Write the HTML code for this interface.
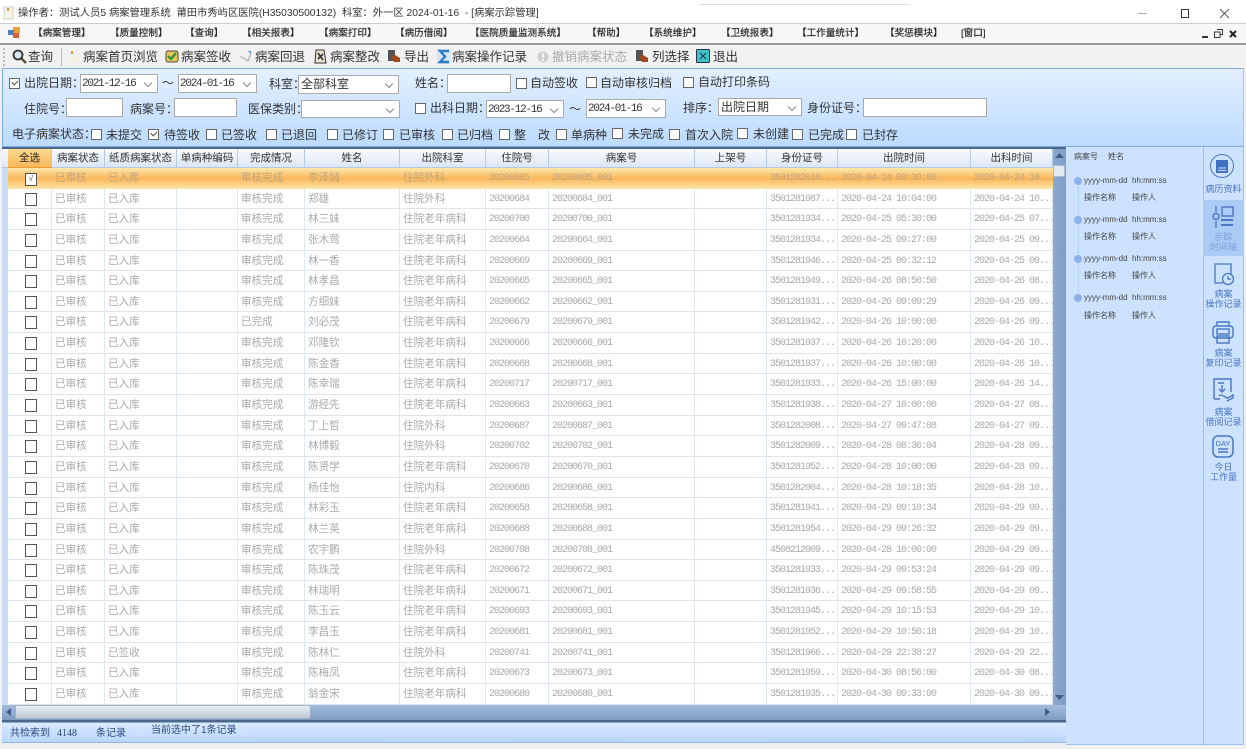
<!DOCTYPE html>
<html lang="zh"><head><meta charset="utf-8"><title>病案示踪管理</title>
<style>
*{box-sizing:border-box;margin:0;padding:0}
html,body{width:1246px;height:749px;overflow:hidden;background:#f0f0f0}
body{position:relative;font-family:"Liberation Sans","Noto Sans CJK SC",sans-serif;color:#222}
.a,.t,.cb,.sel,.inp,svg.a{position:absolute}
.t{white-space:nowrap;line-height:14px}
#title{left:0;top:0;width:1246px;height:24px;background:#fff;border-bottom:1px solid #ccc}
#menu{left:0;top:24px;width:1246px;height:21px;background:#f7f7f7;border-bottom:2px solid #999}
#tool{left:0;top:45px;width:1246px;height:24px;background:#f1f1f1}
.m{font-size:9.6px;top:27px;color:#222;-webkit-text-stroke:.2px #333}
.b{font-size:12.5px;top:50px;color:#333}
#filter{left:2px;top:68px;width:1242px;height:79px;background:linear-gradient(#e3f0ff,#bcdbff);border:1px solid #7fabe2;border-right-color:#a4c6ee}
.f{font-size:12px;color:#333}
.cb{width:11px;height:11px;background:#fff;border:1px solid #666}
.cb.on::after{content:"";position:absolute;left:2px;top:1px;width:5px;height:3px;border-left:1px solid #444;border-bottom:1px solid #444;transform:rotate(-45deg)}
.sel,.inp{background:#fff;border:1px solid #aaa;font-size:12px;color:#333;line-height:16px;padding-left:2px;white-space:nowrap;overflow:hidden}
.sel::after{content:"";position:absolute;right:6px;top:5px;width:5px;height:5px;border-right:1px solid #888;border-bottom:1px solid #888;transform:rotate(45deg)}
.d{font-family:"Liberation Mono",monospace;font-size:11px;letter-spacing:-1.25px;padding-left:1px;line-height:18px}
#grid{left:2px;top:147px;width:1064px;height:575px;background:#fff;border:1px solid #4d6787;border-top-width:2px;border-bottom-width:2px;border-left:0;overflow:hidden}
#head,.r{position:absolute;left:6px;display:flex}
#head{top:0;height:19px;left:0;width:1052px;background:linear-gradient(#f9fbfe,#dbe6f4);border-bottom:1px solid #b7c9df}
#head span{font-size:10.5px;color:#333;text-align:center;border-right:1px solid #b7c9df;line-height:19px;white-space:nowrap;overflow:hidden}
#head span:first-child{margin-left:6px;background:linear-gradient(#fbd98f,#f8b85c);color:#222;border-bottom:1px solid #f39a2d;height:19px}
#rows{position:absolute;left:0;top:19px;width:1052px;height:537px;overflow:hidden;background:linear-gradient(90deg,#c9dcf5 6px,#fff 6px)}
.r{position:static;margin-left:6px;height:20.65px;border-bottom:1px solid #dbe4f1;width:1045px}
.r span{display:block;font-size:10.6px;color:#aaa;line-height:21px;padding-left:3px;border-right:1px solid #dfe7f3;white-space:nowrap;overflow:hidden}
.r span.n{font-family:"Liberation Mono",monospace;font-size:10px;letter-spacing:-1px;padding-left:3px}
.r span:first-child{position:relative;padding:0}
.r span:first-child::after{content:"";position:absolute;left:17px;top:4px;width:10px;height:11px;border:1px solid #555;background:#fff}
.r.sel1{background:linear-gradient(#fde8ac,#fbb65c 50%,#fee6a3);border-bottom:0}
.r.sel1 span{color:#bfa67a;border-right-color:transparent}
.r.sel1 span:first-child::after{content:"√";font-size:8px;line-height:9px;text-align:center;color:#444;top:5px}
.c1{width:44px}.c2{width:53px}.c3{width:72px}.c4{width:61px}.c5{width:67px}.c6{width:95px}.c7{width:86px}.c8{width:63px}.c9{width:146px}.c10{width:72px}.c11{width:71px}.c12{width:133px}.c13{width:82px}
.r span:nth-child(1){width:44px}.r span:nth-child(2){width:53px}.r span:nth-child(3){width:72px}.r span:nth-child(4){width:61px}.r span:nth-child(5){width:67px}.r span:nth-child(6){width:95px}.r span:nth-child(7){width:86px}.r span:nth-child(8){width:63px}.r span:nth-child(9){width:146px}.r span:nth-child(10){width:72px}.r span:nth-child(11){width:71px}.r span:nth-child(12){width:133px}.r span:nth-child(13){width:82px}
#vs{left:1053px;top:149px;width:13px;height:571px;background:linear-gradient(90deg,#8ba9cf,#7f9ec6)}
#hs{left:2px;top:705px;width:1064px;height:15px;background:linear-gradient(#a3bcdb,#7d9cc3)}
#thumb{left:15px;top:705px;width:296px;height:14px;background:linear-gradient(#e8edf3,#bcc8d6);border:1px solid #a2b1c4;border-radius:2px}
#status{left:2px;top:722px;width:1064px;height:21px;background:linear-gradient(#dbeaff,#b8d7ff);border-bottom:1px solid #8eb6ec;border-top:1px solid #86a9d8}
.s{font-size:10px;color:#2b4a78}
#side{left:1066px;top:147px;width:137px;height:598px;background:#cce2fd;border-bottom:1px solid #9fc1ee}
#nav{left:1203px;top:147px;width:41px;height:598px;background:#cce2fd;border-left:1px solid #9cbdea;border-right:1px solid #9cbdea;border-bottom:1px solid #9fc1ee}
#act{left:1203px;top:200px;width:41px;height:56px;background:#aaccf4}
.p{font-size:8px;color:#444;line-height:10px}
.dot{width:8px;height:8px;border-radius:50%;background:#8db2ea}
.nl{font-size:9px;line-height:9.5px;color:#4a76c4;text-align:center;width:41px;left:1203px;white-space:normal}
</style></head><body>
<div class="a" id="title"></div>
<div class="a" style="left:700px;top:4px;width:210px;height:1px;background:#ddd"></div>
<svg class="a" style="left:3px;top:6px" width="11" height="14"><rect x="1" y="1" width="9" height="12" fill="#f6f3ea" stroke="#d8d2c2"/><rect x="4" y="2" width="2" height="3" fill="#d89a3c"/></svg>
<div class="t" style="left:18px;top:7px;font-size:10.3px;color:#333">操作者：测试人员5 病案管理系统&nbsp; 莆田市秀屿区医院(H35030500132)&nbsp; 科室：外一区 2024-01-16&nbsp; - [病案示踪管理]</div>
<div class="a" style="left:1138px;top:13px;width:9px;height:1px;background:#aaa"></div>
<div class="a" style="left:1181px;top:9px;width:8px;height:9px;border:1px solid #333"></div>
<svg class="a" style="left:1219px;top:8px" width="11" height="11"><path d="M1 1L10 10M10 1L1 10" stroke="#555" stroke-width="1"/></svg>

<div class="a" id="menu"></div>
<svg class="a" style="left:8px;top:27px" width="13" height="12"><rect x="5" y="0" width="7" height="6" fill="#e8a23a"/><rect x="0" y="3" width="6" height="5" fill="#4c7fc4"/><rect x="5" y="6" width="6" height="5" fill="#d9603a"/></svg>
<div class="t m" style="left:33px">【病案管理】</div>
<div class="t m" style="left:110px">【质量控制】</div>
<div class="t m" style="left:185px">【查询】</div>
<div class="t m" style="left:242px">【相关报表】</div>
<div class="t m" style="left:319px">【病案打印】</div>
<div class="t m" style="left:395px">【病历借阅】</div>
<div class="t m" style="left:470px">【医院质量监测系统】</div>
<div class="t m" style="left:587px">【帮助】</div>
<div class="t m" style="left:644px">【系统维护】</div>
<div class="t m" style="left:721px">【卫统报表】</div>
<div class="t m" style="left:797px">【工作量统计】</div>
<div class="t m" style="left:885px">【奖惩模块】</div>
<div class="t m" style="left:961px">[窗口]</div>
<div class="a" style="left:1202px;top:36px;width:6px;height:2px;background:#333"></div>
<svg class="a" style="left:1214px;top:29px" width="9" height="9"><path d="M3 .5H8.500V5.500H6.500M.5 3H6V8.500H.5Z" fill="none" stroke="#333"/></svg>
<svg class="a" style="left:1229px;top:30px" width="8" height="8"><path d="M1 1L7 7M7 1L1 7" stroke="#222" stroke-width="2"/></svg>

<div class="a" id="tool"></div>
<div class="a" style="left:3px;top:48px;width:2px;height:18px;border-left:2px dotted #bbb"></div>
<svg class="a" style="left:12px;top:49px" width="15" height="15"><circle cx="6" cy="6" r="4.500" fill="#d8e6f2" stroke="#333" stroke-width="1.800"/><path d="M9.500 9.500L14 14" stroke="#553" stroke-width="2.400"/></svg>
<div class="t b" style="left:28px">查询</div>
<div class="a" style="left:61px;top:48px;width:1px;height:18px;background:#bbb"></div>
<svg class="a" style="left:68px;top:49px" width="12" height="14"><rect x="1" y="8" width="10" height="5" fill="#f4efdf"/><rect x="3" y="2" width="2" height="3" fill="#d89a3c"/></svg>
<div class="t b" style="left:83px">病案首页浏览</div>
<svg class="a" style="left:165px;top:50px" width="14" height="13"><rect x="1" y="1" width="12" height="11" rx="2" fill="#e8c85a" stroke="#4a4a3a"/><path d="M3 6L6 9L11 3" fill="none" stroke="#2f8a3a" stroke-width="2.200"/></svg>
<div class="t b" style="left:181px">病案签收</div>
<svg class="a" style="left:238px;top:49px" width="15" height="14"><path d="M2 7L10 12L13 4" fill="none" stroke="#bbb" stroke-width="1.500"/><path d="M10 2L13 2L13 5" fill="#4f8fd8"/></svg>
<div class="t b" style="left:255px">病案回退</div>
<svg class="a" style="left:313px;top:49px" width="15" height="15"><path d="M3 1H11L13 14H2Z" fill="#e9e4d4" stroke="#333"/><path d="M5 4L10 11M10 5L5 10" stroke="#333" stroke-width="1.600"/></svg>
<div class="t b" style="left:330px">病案整改</div>
<svg class="a" style="left:387px;top:49px" width="15" height="15"><rect x="1" y="1" width="7" height="11" fill="#555"/><path d="M4 7L8 6L13 9L13 13L7 13Z" fill="#a24a1e"/></svg>
<div class="t b" style="left:404px">导出</div>
<svg class="a" style="left:437px;top:49px" width="14" height="15"><rect width="14" height="15" fill="#d8e6f4"/><path d="M12 2H3L8 7.500L3 13H12" fill="none" stroke="#2f7cc0" stroke-width="2.400"/></svg>
<div class="t b" style="left:452px">病案操作记录</div>
<svg class="a" style="left:537px;top:51px" width="12" height="12"><circle cx="6" cy="6" r="5.500" fill="#cfcfcf"/><rect x="5" y="2" width="2" height="5" fill="#f2f2f2"/><rect x="5" y="8" width="2" height="2" fill="#f2f2f2"/></svg>
<div class="t b" style="left:552px;color:#aaa">撤销病案状态</div>
<svg class="a" style="left:635px;top:49px" width="15" height="15"><rect x="1" y="1" width="7" height="11" fill="#555"/><path d="M4 7L8 6L13 9L13 13L7 13Z" fill="#a24a1e"/></svg>
<div class="t b" style="left:652px">列选择</div>
<svg class="a" style="left:696px;top:49px" width="14" height="14"><rect x=".5" y=".5" width="13" height="13" rx="1" fill="#3cc0cc" stroke="#234"/><path d="M4 4L10 10M10 4L4 10" stroke="#234"/></svg>
<div class="t b" style="left:713px">退出</div>

<div class="a" id="filter"></div>
<div class="cb on" style="left:9px;top:78px"></div>
<div class="t f" style="left:24px;top:76px">出院日期：</div>
<div class="sel d" style="left:80px;top:74px;width:78px;height:19px">2021-12-16</div>
<div class="t f" style="left:162px;top:76px">～</div>
<div class="sel d" style="left:178px;top:74px;width:79px;height:19px">2024-01-16</div>
<div class="t f" style="left:269px;top:77px">科室：</div>
<div class="sel" style="left:298px;top:75px;width:101px;height:19px">全部科室</div>
<div class="t f" style="left:415px;top:76px">姓名：</div>
<div class="inp" style="left:447px;top:74px;width:64px;height:19px"></div>
<div class="cb" style="left:516px;top:78px"></div><div class="t f" style="left:530px;top:76px">自动签收</div>
<div class="cb" style="left:586px;top:77px"></div><div class="t f" style="left:600px;top:76px">自动审核归档</div>
<div class="cb" style="left:683px;top:77px"></div><div class="t f" style="left:698px;top:75px">自动打印条码</div>

<div class="t f" style="left:24px;top:102px">住院号：</div>
<div class="inp" style="left:66px;top:98px;width:57px;height:19px"></div>
<div class="t f" style="left:130px;top:102px">病案号：</div>
<div class="inp" style="left:174px;top:98px;width:63px;height:19px"></div>
<div class="t f" style="left:248px;top:102px">医保类别：</div>
<div class="sel" style="left:301px;top:100px;width:99px;height:18px"></div>
<div class="cb" style="left:415px;top:103px"></div>
<div class="t f" style="left:430px;top:101px">出科日期：</div>
<div class="sel d" style="left:486px;top:100px;width:78px;height:18px">2023-12-16</div>
<div class="t f" style="left:569px;top:102px">～</div>
<div class="sel d" style="left:586px;top:99px;width:80px;height:19px">2024-01-16</div>
<div class="t f" style="left:683px;top:101px">排序：</div>
<div class="sel" style="left:718px;top:98px;width:84px;height:18px">出院日期</div>
<div class="t f" style="left:807px;top:101px">身份证号：</div>
<div class="inp" style="left:863px;top:98px;width:124px;height:19px"></div>

<div class="t f" style="left:12px;top:127px">电子病案状态：</div>
<div class="cb" style="left:91px;top:129px"></div><div class="t f" style="left:106px;top:128px">未提交</div>
<div class="cb on" style="left:148px;top:129px"></div><div class="t f" style="left:164px;top:128px">待签收</div>
<div class="cb" style="left:206px;top:129px"></div><div class="t f" style="left:221px;top:128px">已签收</div>
<div class="cb" style="left:266px;top:129px"></div><div class="t f" style="left:281px;top:128px">已退回</div>
<div class="cb" style="left:327px;top:129px"></div><div class="t f" style="left:342px;top:128px">已修订</div>
<div class="cb" style="left:383px;top:129px"></div><div class="t f" style="left:399px;top:128px">已审核</div>
<div class="cb" style="left:442px;top:129px"></div><div class="t f" style="left:457px;top:128px">已归档</div>
<div class="cb" style="left:499px;top:129px"></div><div class="t f" style="left:514px;top:128px">整</div><div class="t f" style="left:538px;top:128px">改</div>
<div class="cb" style="left:556px;top:129px"></div><div class="t f" style="left:571px;top:128px">单病种</div>
<div class="cb" style="left:612px;top:128px"></div><div class="t f" style="left:628px;top:127px">未完成</div>
<div class="cb" style="left:669px;top:129px"></div><div class="t f" style="left:685px;top:128px">首次入院</div>
<div class="cb" style="left:737px;top:128px"></div><div class="t f" style="left:753px;top:127px">未创建</div>
<div class="cb" style="left:792px;top:129px"></div><div class="t f" style="left:808px;top:128px">已完成</div>
<div class="cb" style="left:846px;top:129px"></div><div class="t f" style="left:862px;top:128px">已封存</div>

<div class="a" id="grid">
<div id="head"><span class="c1">全选</span><span class="c2">病案状态</span><span class="c3">纸质病案状态</span><span class="c4">单病种编码</span><span class="c5">完成情况</span><span class="c6">姓名</span><span class="c7">出院科室</span><span class="c8">住院号</span><span class="c9">病案号</span><span class="c10">上架号</span><span class="c11">身份证号</span><span class="c12">出院时间</span><span class="c13">出科时间</span></div>
<div id="rows">
<div class="r sel1"><span></span><span>已审核</span><span>已入库</span><span></span><span>审核完成</span><span>李泽铖</span><span>住院外科</span><span class="n">20200685</span><span class="n">20200685_001</span><span></span><span class="n">3501282010...</span><span class="n">2020-04-24 09:30:00</span><span class="n">2020-04-24 10...</span></div>
<div class="r"><span></span><span>已审核</span><span>已入库</span><span></span><span>审核完成</span><span>郑雄</span><span>住院外科</span><span class="n">20200684</span><span class="n">20200684_001</span><span></span><span class="n">3501281987...</span><span class="n">2020-04-24 10:04:00</span><span class="n">2020-04-24 10...</span></div>
<div class="r"><span></span><span>已审核</span><span>已入库</span><span></span><span>审核完成</span><span>林三妹</span><span>住院老年病科</span><span class="n">20200700</span><span class="n">20200700_001</span><span></span><span class="n">3501281934...</span><span class="n">2020-04-25 05:30:00</span><span class="n">2020-04-25 07...</span></div>
<div class="r"><span></span><span>已审核</span><span>已入库</span><span></span><span>审核完成</span><span>张木莺</span><span>住院老年病科</span><span class="n">20200664</span><span class="n">20200664_001</span><span></span><span class="n">3501281934...</span><span class="n">2020-04-25 09:27:00</span><span class="n">2020-04-25 09...</span></div>
<div class="r"><span></span><span>已审核</span><span>已入库</span><span></span><span>审核完成</span><span>林一香</span><span>住院老年病科</span><span class="n">20200669</span><span class="n">20200669_001</span><span></span><span class="n">3501281946...</span><span class="n">2020-04-25 09:32:12</span><span class="n">2020-04-25 09...</span></div>
<div class="r"><span></span><span>已审核</span><span>已入库</span><span></span><span>审核完成</span><span>林孝昌</span><span>住院老年病科</span><span class="n">20200665</span><span class="n">20200665_001</span><span></span><span class="n">3501281949...</span><span class="n">2020-04-26 08:50:50</span><span class="n">2020-04-26 08...</span></div>
<div class="r"><span></span><span>已审核</span><span>已入库</span><span></span><span>审核完成</span><span>方细妹</span><span>住院老年病科</span><span class="n">20200662</span><span class="n">20200662_001</span><span></span><span class="n">3501281931...</span><span class="n">2020-04-26 09:09:29</span><span class="n">2020-04-26 09...</span></div>
<div class="r"><span></span><span>已审核</span><span>已入库</span><span></span><span>已完成</span><span>刘必茂</span><span>住院老年病科</span><span class="n">20200679</span><span class="n">20200679_001</span><span></span><span class="n">3501281942...</span><span class="n">2020-04-26 10:00:00</span><span class="n">2020-04-26 09...</span></div>
<div class="r"><span></span><span>已审核</span><span>已入库</span><span></span><span>审核完成</span><span>邓隆钦</span><span>住院老年病科</span><span class="n">20200666</span><span class="n">20200666_001</span><span></span><span class="n">3501281937...</span><span class="n">2020-04-26 10:20:00</span><span class="n">2020-04-26 10...</span></div>
<div class="r"><span></span><span>已审核</span><span>已入库</span><span></span><span>审核完成</span><span>陈金香</span><span>住院老年病科</span><span class="n">20200668</span><span class="n">20200668_001</span><span></span><span class="n">3501281937...</span><span class="n">2020-04-26 10:00:00</span><span class="n">2020-04-26 10...</span></div>
<div class="r"><span></span><span>已审核</span><span>已入库</span><span></span><span>审核完成</span><span>陈幸瑞</span><span>住院老年病科</span><span class="n">20200717</span><span class="n">20200717_001</span><span></span><span class="n">3501281933...</span><span class="n">2020-04-26 15:00:00</span><span class="n">2020-04-26 14...</span></div>
<div class="r"><span></span><span>已审核</span><span>已入库</span><span></span><span>审核完成</span><span>游经先</span><span>住院老年病科</span><span class="n">20200663</span><span class="n">20200663_001</span><span></span><span class="n">3501281938...</span><span class="n">2020-04-27 10:00:00</span><span class="n">2020-04-27 08...</span></div>
<div class="r"><span></span><span>已审核</span><span>已入库</span><span></span><span>审核完成</span><span>丁上哲</span><span>住院外科</span><span class="n">20200687</span><span class="n">20200687_001</span><span></span><span class="n">3501282008...</span><span class="n">2020-04-27 09:47:08</span><span class="n">2020-04-27 09...</span></div>
<div class="r"><span></span><span>已审核</span><span>已入库</span><span></span><span>审核完成</span><span>林博毅</span><span>住院外科</span><span class="n">20200702</span><span class="n">20200702_001</span><span></span><span class="n">3501282009...</span><span class="n">2020-04-28 08:36:04</span><span class="n">2020-04-28 09...</span></div>
<div class="r"><span></span><span>已审核</span><span>已入库</span><span></span><span>审核完成</span><span>陈贤学</span><span>住院老年病科</span><span class="n">20200670</span><span class="n">20200670_001</span><span></span><span class="n">3501281952...</span><span class="n">2020-04-28 10:00:00</span><span class="n">2020-04-28 09...</span></div>
<div class="r"><span></span><span>已审核</span><span>已入库</span><span></span><span>审核完成</span><span>杨佳怡</span><span>住院内科</span><span class="n">20200686</span><span class="n">20200686_001</span><span></span><span class="n">3501282004...</span><span class="n">2020-04-28 10:18:35</span><span class="n">2020-04-28 10...</span></div>
<div class="r"><span></span><span>已审核</span><span>已入库</span><span></span><span>审核完成</span><span>林彩玉</span><span>住院老年病科</span><span class="n">20200658</span><span class="n">20200658_001</span><span></span><span class="n">3501281941...</span><span class="n">2020-04-29 09:10:34</span><span class="n">2020-04-29 09...</span></div>
<div class="r"><span></span><span>已审核</span><span>已入库</span><span></span><span>审核完成</span><span>林兰英</span><span>住院老年病科</span><span class="n">20200688</span><span class="n">20200688_001</span><span></span><span class="n">3501281954...</span><span class="n">2020-04-29 09:26:32</span><span class="n">2020-04-29 09...</span></div>
<div class="r"><span></span><span>已审核</span><span>已入库</span><span></span><span>审核完成</span><span>农宇鹏</span><span>住院外科</span><span class="n">20200708</span><span class="n">20200708_001</span><span></span><span class="n">4508212009...</span><span class="n">2020-04-28 10:00:00</span><span class="n">2020-04-29 09...</span></div>
<div class="r"><span></span><span>已审核</span><span>已入库</span><span></span><span>审核完成</span><span>陈珠茂</span><span>住院老年病科</span><span class="n">20200672</span><span class="n">20200672_001</span><span></span><span class="n">3501281933...</span><span class="n">2020-04-29 09:53:24</span><span class="n">2020-04-29 09...</span></div>
<div class="r"><span></span><span>已审核</span><span>已入库</span><span></span><span>审核完成</span><span>林瑞明</span><span>住院老年病科</span><span class="n">20200671</span><span class="n">20200671_001</span><span></span><span class="n">3501281936...</span><span class="n">2020-04-29 09:58:55</span><span class="n">2020-04-29 09...</span></div>
<div class="r"><span></span><span>已审核</span><span>已入库</span><span></span><span>审核完成</span><span>陈玉云</span><span>住院老年病科</span><span class="n">20200693</span><span class="n">20200693_001</span><span></span><span class="n">3501281945...</span><span class="n">2020-04-29 10:15:53</span><span class="n">2020-04-29 10...</span></div>
<div class="r"><span></span><span>已审核</span><span>已入库</span><span></span><span>审核完成</span><span>李昌玉</span><span>住院老年病科</span><span class="n">20200681</span><span class="n">20200681_001</span><span></span><span class="n">3501281952...</span><span class="n">2020-04-29 10:50:18</span><span class="n">2020-04-29 10...</span></div>
<div class="r"><span></span><span>已审核</span><span>已签收</span><span></span><span>审核完成</span><span>陈林仁</span><span>住院外科</span><span class="n">20200741</span><span class="n">20200741_001</span><span></span><span class="n">3501281966...</span><span class="n">2020-04-29 22:38:27</span><span class="n">2020-04-29 22...</span></div>
<div class="r"><span></span><span>已审核</span><span>已入库</span><span></span><span>审核完成</span><span>陈梅凤</span><span>住院老年病科</span><span class="n">20200673</span><span class="n">20200673_001</span><span></span><span class="n">3501281959...</span><span class="n">2020-04-30 08:56:00</span><span class="n">2020-04-30 08...</span></div>
<div class="r"><span></span><span>已审核</span><span>已入库</span><span></span><span>审核完成</span><span>翁金宋</span><span>住院老年病科</span><span class="n">20200680</span><span class="n">20200680_001</span><span></span><span class="n">3501281935...</span><span class="n">2020-04-30 09:33:00</span><span class="n">2020-04-30 09...</span></div>
</div>
</div>
<div class="a" id="vs"></div>
<div class="a" style="left:1053px;top:165px;width:12px;height:12px;background:#e3e9f1;border:1px solid #a9bad0"></div>
<svg class="a" style="left:1055px;top:153px" width="9" height="6"><path d="M0 5L4.500 0L9 5Z" fill="#3f5f8a"/></svg>
<svg class="a" style="left:1055px;top:695px" width="9" height="6"><path d="M0 0L4.500 5L9 0Z" fill="#3f5f8a"/></svg>
<div class="a" id="hs"></div>
<div class="a" id="thumb"></div>
<svg class="a" style="left:6px;top:708px" width="5" height="8"><path d="M5 0L0 4L5 8Z" fill="#3f5f8a"/></svg>
<svg class="a" style="left:1045px;top:708px" width="5" height="8"><path d="M0 0L5 4L0 8Z" fill="#3f5f8a"/></svg>
<div class="a" id="status"></div>
<div class="t s" style="left:10px;top:727px">共检索到</div>
<div class="t s" style="left:57px;top:727px;font-family:'Liberation Serif',serif">4148</div>
<div class="t s" style="left:96px;top:727px">条记录</div>
<div class="t s" style="left:151px;top:724px">当前选中了1条记录</div>

<div class="a" id="side"></div>
<div class="t p" style="left:1074px;top:152px">病案号</div><div class="t p" style="left:1108px;top:152px">姓名</div>
<div class="a" style="left:1078px;top:181px;width:1px;height:117px;background:#b9d3f6"></div>
<div class="a dot" style="left:1074px;top:177px"></div><div class="t p" style="left:1084px;top:176px">yyyy-mm-dd&nbsp; hh:mm:ss</div><div class="t p" style="left:1084px;top:193px">操作名称</div><div class="t p" style="left:1132px;top:193px">操作人</div>
<div class="a dot" style="left:1074px;top:216px"></div><div class="t p" style="left:1084px;top:215px">yyyy-mm-dd&nbsp; hh:mm:ss</div><div class="t p" style="left:1084px;top:232px">操作名称</div><div class="t p" style="left:1132px;top:232px">操作人</div>
<div class="a dot" style="left:1074px;top:255px"></div><div class="t p" style="left:1084px;top:254px">yyyy-mm-dd&nbsp; hh:mm:ss</div><div class="t p" style="left:1084px;top:271px">操作名称</div><div class="t p" style="left:1132px;top:271px">操作人</div>
<div class="a dot" style="left:1074px;top:294px"></div><div class="t p" style="left:1084px;top:293px">yyyy-mm-dd&nbsp; hh:mm:ss</div><div class="t p" style="left:1084px;top:311px">操作名称</div><div class="t p" style="left:1132px;top:311px">操作人</div>

<div class="a" id="nav"></div>
<div class="a" id="act"></div>
<svg class="a" style="left:1209px;top:153px" width="26" height="26"><circle cx="13" cy="13" r="11.500" fill="none" stroke="#4a76c4"/><rect x="7" y="7" width="12" height="13" fill="#3f6fc0"/><path d="M9 15H17M9 17.500H17" stroke="#cce2fd"/></svg>
<div class="t nl" style="top:185px">病历资料</div>
<svg class="a" style="left:1211px;top:205px" width="24" height="24" fill="none" stroke="#4a76c4" stroke-width="1.400"><path d="M5 1V7M5 16V23"/><circle cx="5" cy="11.500" r="3"/><rect x="11" y="2" width="11" height="9"/><path d="M10 15H22M10 20H22" stroke-width="2"/></svg>
<div class="t nl" style="top:233px;color:#7ba0da">示踪<br>时间轴</div>
<svg class="a" style="left:1213px;top:263px" width="22" height="23" fill="none" stroke="#4a76c4" stroke-width="1.300"><path d="M18 12V1H2V20H10"/><circle cx="15" cy="16" r="5.500"/><path d="M15 13V16H18"/></svg>
<div class="t nl" style="top:290px">病案<br>操作记录</div>
<svg class="a" style="left:1211px;top:321px" width="24" height="23" fill="none" stroke="#4a76c4" stroke-width="1.400"><path d="M6 5V1H18V5"/><rect x="2" y="5" width="20" height="12" rx="3"/><rect x="6" y="8" width="12" height="5"/><rect x="6" y="15" width="12" height="7"/></svg>
<div class="t nl" style="top:349px">病案<br>复印记录</div>
<svg class="a" style="left:1211px;top:378px" width="24" height="24" fill="none" stroke="#4a76c4" stroke-width="1.400"><path d="M3 21V1H20V14M3 21H9"/><path d="M7 5H13M11 7V13M8 11L11 14L14 11M8 18C11 15 14 20 17 20L22 17V20L16 23"/></svg>
<div class="t nl" style="top:408px">病案<br>借阅记录</div>
<svg class="a" style="left:1211px;top:435px" width="24" height="23" fill="none" stroke="#4a76c4" stroke-width="1.500"><rect x="2" y="1" width="20" height="21" rx="5"/><text x="12" y="11" font-size="7.500" text-anchor="middle" fill="#4a76c4" stroke="none" font-family="Liberation Sans,sans-serif">DAY</text><path d="M7 14H17M7 17H17"/></svg>
<div class="t nl" style="top:463px">今日<br>工作量</div>
</body></html>
